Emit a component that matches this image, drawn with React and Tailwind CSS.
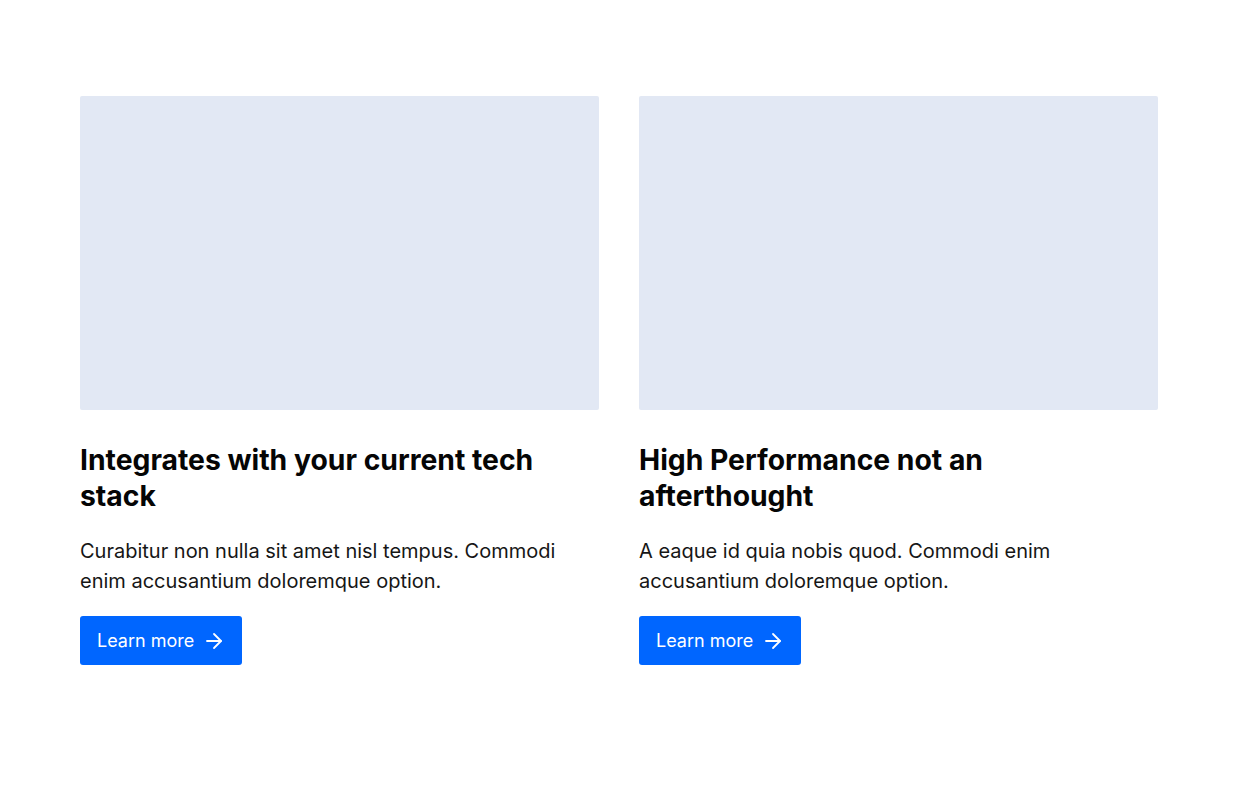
import { ArrowRight } from 'lucide-react';

const features = [
  {
    title: 'Integrates with your current tech stack',
    body: 'Curabitur non nulla sit amet nisl tempus. Commodi enim accusantium doloremque option.',
  },
  {
    title: 'High Performance not an afterthought',
    body: 'A eaque id quia nobis quod. Commodi enim accusantium doloremque option.',
  },
];

export default function App() {
  return (
    <div className="min-h-[794px] bg-white font-['Inter',sans-serif]">
      <section className="px-20 pt-24">
        <div className="grid grid-cols-2 gap-10">
          {features.map((f) => (
            <div key={f.title} className="flex flex-col">
              {/* Image placeholder */}
              <div className="h-[314px] w-full rounded-[2px] bg-[#e2e8f4]" />
              <h3 className="mt-8 max-w-[470px] text-[28.3px] font-bold leading-9 text-[#050505]">
                {f.title}
              </h3>
              <p className="mt-[22px] text-xl leading-[30px] text-[#161616]">{f.body}</p>
              <div className="mt-5">
                <button className="inline-flex h-[49px] items-center gap-2 rounded-[3px] bg-[#0066ff] pl-[17px] pr-4 text-lg text-white">
                  Learn more
                  <ArrowRight className="h-6 w-6" strokeWidth={1.8} />
                </button>
              </div>
            </div>
          ))}
        </div>
      </section>
    </div>
  );
}
